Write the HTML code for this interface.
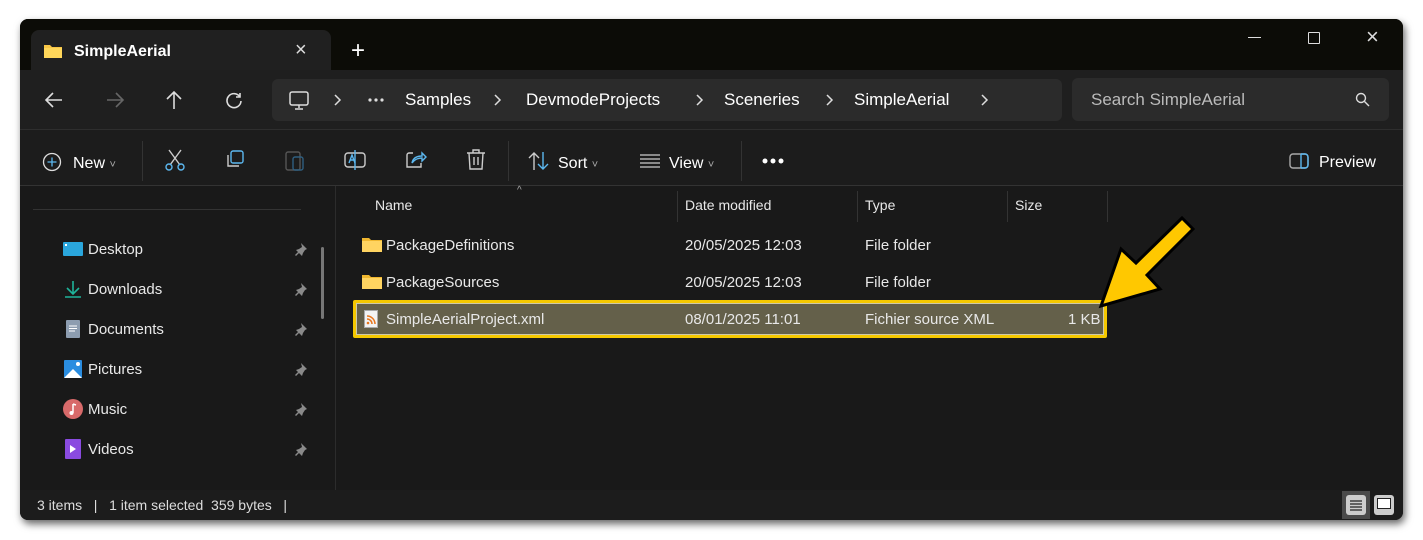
<!DOCTYPE html>
<html><head><meta charset="utf-8"><style>
*{margin:0;padding:0;box-sizing:border-box}
body{width:1423px;height:540px;background:#fff;position:relative;overflow:hidden;font-family:"Segoe UI","Liberation Sans",sans-serif;color:#fff}
.win{position:absolute;left:20px;top:19px;width:1383px;height:501px;background:#191919;border-radius:8px;overflow:hidden;box-shadow:2px 4px 8px rgba(0,0,0,.6)}
.title{position:absolute;left:0;top:0;width:100%;height:51px;background:#0c0c07}
.tab{position:absolute;left:11px;top:11px;width:300px;height:41px;background:#202020;border-radius:8px 8px 0 0}
.t{position:absolute;white-space:nowrap}
.addr{position:absolute;left:0;top:51px;width:100%;height:60px;background:#1f1f1f;border-bottom:1px solid #2e2e2e}
.tool{position:absolute;left:0;top:111px;width:100%;height:56px;background:#1c1c1c;border-bottom:1px solid #333}
.bc{position:absolute;left:252px;top:9px;width:790px;height:42px;background:#2b2b2b;border-radius:6px}
.sr{position:absolute;left:1052px;top:8px;width:317px;height:43px;background:#2b2b2b;border-radius:6px}
.sep{position:absolute;width:1px;background:#333}
.f15{font-size:17px}
.f14{font-size:15px;color:#e8e8e8}
.st{position:absolute;left:0;top:471px;width:100%;height:30px;background:#1c1c1c}
.ch{position:absolute;top:15px}
</style></head><body>
<div class="win">
 <div class="title">
  <div class="tab">
   <svg class="t" style="left:12px;top:13px" width="20" height="16"><path d="M1 2h6l2 2h10v11H1z" fill="#f7c545"/><path d="M1 5h18v10H1z" fill="#ffd65a"/></svg>
   <div class="t" style="left:43px;top:13px;font-size:16px;font-weight:bold">SimpleAerial</div>
   <div class="t" style="left:264px;top:9px;font-size:20px;color:#ddd">×</div>
  </div>
  <div class="t" style="left:331px;top:20px;font-size:24px;line-height:24px">+</div>
  <div class="t" style="left:1228px;top:18px;width:13px;height:1px;background:#ddd"></div>
  <div class="t" style="left:1288px;top:13px;width:12px;height:12px;border:1.5px solid #ddd;border-radius:1px"></div>
  <div class="t" style="left:1346px;top:5px;font-size:22px;color:#ddd">×</div>
 </div>
 <div class="addr">
  <svg class="t" style="left:24px;top:21px" width="20" height="18" stroke="#ddd" stroke-width="1.6" fill="none"><path d="M18 9H2M9 2L2 9l7 7"/></svg>
  <svg class="t" style="left:85px;top:21px" width="20" height="18" stroke="#666" stroke-width="1.6" fill="none"><path d="M2 9h16M11 2l7 7-7 7"/></svg>
  <svg class="t" style="left:145px;top:20px" width="18" height="20" stroke="#ddd" stroke-width="1.6" fill="none"><path d="M9 19V2M2 9l7-7 7 7"/></svg>
  <svg class="t" style="left:205px;top:21px" width="18" height="18" stroke="#ddd" stroke-width="1.6" fill="none"><path d="M15 6A7 7 0 1 0 16 10M15 2v4h-4"/></svg>
  <div class="bc">
   <svg class="t" style="left:17px;top:12px" width="20" height="19" stroke="#ddd" stroke-width="1.5" fill="none"><rect x="1" y="1" width="18" height="13" rx="2"/><path d="M10 14v3M6 18h8"/></svg>
   <svg class="ch" style="left:62px" width="8" height="12" stroke="#ddd" stroke-width="1.5" fill="none"><path d="M1 1l5 5-5 5"/></svg>
   <svg class="ch" style="left:96px;top:19px" width="16" height="4" fill="#ddd"><circle cx="2" cy="2" r="1.6"/><circle cx="8" cy="2" r="1.6"/><circle cx="14" cy="2" r="1.6"/></svg>
   <div class="t f15" style="left:133px;top:11px">Samples</div>
   <svg class="ch" style="left:222px" width="8" height="12" stroke="#ddd" stroke-width="1.5" fill="none"><path d="M1 1l5 5-5 5"/></svg>
   <div class="t f15" style="left:254px;top:11px">DevmodeProjects</div>
   <svg class="ch" style="left:424px" width="8" height="12" stroke="#ddd" stroke-width="1.5" fill="none"><path d="M1 1l5 5-5 5"/></svg>
   <div class="t f15" style="left:452px;top:11px">Sceneries</div>
   <svg class="ch" style="left:554px" width="8" height="12" stroke="#ddd" stroke-width="1.5" fill="none"><path d="M1 1l5 5-5 5"/></svg>
   <div class="t f15" style="left:582px;top:11px">SimpleAerial</div>
   <svg class="ch" style="left:709px" width="8" height="12" stroke="#ddd" stroke-width="1.5" fill="none"><path d="M1 1l5 5-5 5"/></svg>
  </div>
  <div class="sr">
   <div class="t f15" style="left:19px;top:12px;color:#bbb">Search SimpleAerial</div>
   <svg class="t" style="left:283px;top:14px" width="16" height="16" stroke="#ddd" stroke-width="1.4" fill="none"><circle cx="6" cy="6" r="4.5"/><path d="M9.5 9.5L14 14"/></svg>
  </div>
 </div>
 <div class="tool">
  <svg class="t" style="left:22px;top:22px" width="20" height="20" stroke="#ddd" stroke-width="1.3" fill="none"><circle cx="10" cy="10" r="8.5"/><path d="M10 5.5v9M5.5 10h9" stroke="#5cb8f0"/></svg>
  <div class="t f15" style="left:53px;top:25px;font-size:16px">New <span style="font-size:11px;color:#aaa">˅</span></div>
  <div class="sep" style="left:122px;top:11px;height:40px"></div>
  <svg class="t" style="left:145px;top:19px" width="20" height="22" stroke="#5cb8f0" stroke-width="1.4" fill="none"><path d="M4 1l11 15M16 1L5 16" stroke="#ccc"/><circle cx="4" cy="18" r="3"/><circle cx="16" cy="18" r="3"/></svg>
  <svg class="t" style="left:205px;top:20px" width="20" height="20" stroke="#5cb8f0" stroke-width="1.4" fill="none"><rect x="6" y="1" width="12" height="12" rx="2"/><path d="M3 5v11h11" stroke="#ccc"/></svg>
  <svg class="t" style="left:265px;top:19px" width="20" height="22" stroke="#555" stroke-width="1.4" fill="none"><rect x="1" y="3" width="14" height="18" rx="2"/><rect x="8" y="8" width="10" height="13" rx="2" stroke="#2f5f80"/></svg>
  <svg class="t" style="left:324px;top:19px" width="22" height="22" stroke="#ccc" stroke-width="1.4" fill="none"><rect x="1" y="4" width="20" height="14" rx="3"/><path d="M11 1v20" stroke="#5cb8f0"/><path d="M5 14l3-8 3 8M6 11h4" stroke="#5cb8f0"/></svg>
  <svg class="t" style="left:385px;top:19px" width="22" height="22" stroke="#ccc" stroke-width="1.4" fill="none"><path d="M8 4H4a2 2 0 0 0-2 2v12h14v-4"/><path d="M7 14c1-5 5-7 10-7V4l4 4-4 4V9c-4 0-7 1-10 5z" stroke="#5cb8f0"/></svg>
  <svg class="t" style="left:446px;top:19px" width="20" height="22" stroke="#ccc" stroke-width="1.4" fill="none"><path d="M1 4h18M7 4V1h6v3M3 4l1 16h12l1-16M8 8v8M12 8v8"/></svg>
  <div class="sep" style="left:488px;top:11px;height:40px"></div>
  <svg class="t" style="left:508px;top:21px" width="22" height="20" stroke-width="1.4" fill="none"><path d="M6 19V2M1 7l5-5 5 5" stroke="#ccc"/><path d="M15 1v17M10 13l5 5 5-5" stroke="#5cb8f0"/></svg>
  <div class="t f15" style="left:538px;top:25px;font-size:16px">Sort <span style="font-size:11px;color:#aaa">˅</span></div>
  <svg class="t" style="left:620px;top:24px" width="20" height="14" stroke="#ccc" stroke-width="1.3"><path d="M0 1h20M0 5h20M0 9h20M0 13h20"/></svg>
  <div class="t f15" style="left:649px;top:25px;font-size:16px">View <span style="font-size:11px;color:#aaa">˅</span></div>
  <div class="sep" style="left:721px;top:11px;height:40px"></div>
  <svg class="t" style="left:742px;top:28px" width="22" height="6" fill="#fff"><circle cx="3" cy="3" r="2.5"/><circle cx="11" cy="3" r="2.5"/><circle cx="19" cy="3" r="2.5"/></svg>
  <svg class="t" style="left:1269px;top:23px" width="20" height="16" fill="none" stroke-width="1.4"><rect x="1" y="1" width="18" height="14" rx="3" stroke="#aaa"/><path d="M12 1v14" stroke="#5cb8f0"/><path d="M12 1h4a3 3 0 0 1 3 3v8a3 3 0 0 1-3 3h-4" stroke="#5cb8f0"/></svg>
  <div class="t f15" style="left:1299px;top:24px;font-size:16px">Preview</div>
 </div>
 <!-- sidebar -->
 <div class="t" style="left:13px;top:190px;width:268px;height:1px;background:#333"></div>
 <div class="t" style="left:301px;top:228px;width:3px;height:72px;background:#777;border-radius:2px"></div>
 <div class="t" style="left:315px;top:167px;width:1px;height:304px;background:#2c2c2c"></div>
 <svg class="t" style="left:43px;top:223px" width="20" height="16"><rect x="0" y="0" width="20" height="14" rx="1" fill="#2aa6dc"/><rect x="2" y="2" width="2" height="2" fill="#fff"/></svg>
 <svg class="t" style="left:44px;top:261px" width="18" height="18" stroke="#1fb39a" stroke-width="1.6" fill="none"><path d="M9 1v12M3 8l6 6 6-6M1 17h16"/></svg>
 <svg class="t" style="left:46px;top:301px" width="14" height="18"><rect width="14" height="18" rx="1" fill="#8d9db0"/><path d="M3 6h8M3 8.5h8M3 11h6" stroke="#fff" stroke-width="1"/></svg>
 <svg class="t" style="left:44px;top:341px" width="18" height="18"><rect width="18" height="18" rx="1" fill="#2a8de0"/><path d="M0 18L9 9l9 9z" fill="#fff"/><circle cx="14" cy="4" r="2" fill="#fff"/></svg>
 <svg class="t" style="left:43px;top:380px" width="20" height="20"><circle cx="10" cy="10" r="10" fill="#d86a6a"/><path d="M10 5v9M10 5l3 1" stroke="#fff" stroke-width="1.5" fill="none"/><circle cx="8.5" cy="14" r="2" fill="#fff"/></svg>
 <svg class="t" style="left:45px;top:420px" width="16" height="20"><rect width="16" height="20" rx="1" fill="#8a4be0"/><path d="M5 6l6 4-6 4z" fill="#fff"/></svg>
 <div class="t f14" style="left:68px;top:222px">Desktop</div>
 <div class="t f14" style="left:68px;top:262px">Downloads</div>
 <div class="t f14" style="left:68px;top:302px">Documents</div>
 <div class="t f14" style="left:68px;top:342px">Pictures</div>
 <div class="t f14" style="left:68px;top:382px">Music</div>
 <div class="t f14" style="left:68px;top:422px">Videos</div>
 <svg class="t" style="left:274px;top:223px" width="14" height="226" fill="#8a8a8a"><g id="p"><path d="M7 1l6 6-2 1-2 3-1 3-6-6 3-1 3-2z M4 10l-3 3 1 1 3-3z"/></g><use href="#p" y="40"/><use href="#p" y="80"/><use href="#p" y="120"/><use href="#p" y="160"/><use href="#p" y="200"/></svg>
 <!-- headers -->
 <div class="t" style="left:497px;top:166px;font-size:10px;color:#aaa">^</div>
 <div class="t f14" style="left:355px;top:178px;font-size:14px">Name</div>
 <div class="sep" style="left:657px;top:172px;height:31px"></div>
 <div class="t f14" style="left:665px;top:178px;font-size:14px">Date modified</div>
 <div class="sep" style="left:837px;top:172px;height:31px"></div>
 <div class="t f14" style="left:845px;top:178px;font-size:14px">Type</div>
 <div class="sep" style="left:987px;top:172px;height:31px"></div>
 <div class="t f14" style="left:995px;top:178px;font-size:14px">Size</div>
 <div class="sep" style="left:1087px;top:172px;height:31px"></div>
 <!-- rows -->
 <svg class="t" style="left:342px;top:218px" width="20" height="15"><path d="M0 1h7l2 2h11v12H0z" fill="#f0b72f"/><path d="M0 4h20v11H0z" fill="#ffd461"/></svg>
 <svg class="t" style="left:342px;top:255px" width="20" height="15"><path d="M0 1h7l2 2h11v12H0z" fill="#f0b72f"/><path d="M0 4h20v11H0z" fill="#ffd461"/></svg>
 <div class="t f14" style="left:366px;top:218px">PackageDefinitions</div>
 <div class="t f14" style="left:665px;top:218px">20/05/2025 12:03</div>
 <div class="t f14" style="left:845px;top:218px">File folder</div>
 <div class="t f14" style="left:366px;top:255px">PackageSources</div>
 <div class="t f14" style="left:665px;top:255px">20/05/2025 12:03</div>
 <div class="t f14" style="left:845px;top:255px">File folder</div>
 <div class="t" style="left:333px;top:281px;width:754px;height:38px;background:#f5c800;border-radius:2px"></div>
 <div class="t" style="left:336px;top:284px;width:748px;height:32px;background:#64604a;border:1px solid #cfc9a8"></div>
 <svg class="t" style="left:344px;top:291px" width="14" height="18"><rect x=".5" y=".5" width="13" height="17" fill="#f3f3f3" stroke="#aaa"/><path d="M3 6a8 8 0 0 1 8 8M3 9a5 5 0 0 1 5 5" stroke="#e8761e" stroke-width="1.5" fill="none"/><circle cx="4" cy="13" r="1.3" fill="#e8761e"/></svg>
 <div class="t f14" style="left:366px;top:292px">SimpleAerialProject.xml</div>
 <div class="t f14" style="left:665px;top:292px">08/01/2025 11:01</div>
 <div class="t f14" style="left:845px;top:292px">Fichier source XML</div>
 <div class="t f14" style="left:1048px;top:292px">1 KB</div>
 <div class="st">
  <div class="t" style="left:17px;top:7px;font-size:14px;color:#ddd">3 items &nbsp;&nbsp;| &nbsp;&nbsp;1 item selected &nbsp;359 bytes &nbsp;&nbsp;|</div>
  <div class="t" style="left:1322px;top:1px;width:28px;height:28px;background:#4a4a4a"></div>
  <div class="t" style="left:1326px;top:5px;width:20px;height:20px;background:#ccc;border-radius:3px"></div>
  <svg class="t" style="left:1330px;top:10px" width="12" height="11" stroke="#222" stroke-width="1.2"><path d="M0 1h12M0 4h12M0 7h12M0 10h12"/></svg>
  <div class="t" style="left:1354px;top:5px;width:20px;height:20px;background:#ccc;border-radius:3px"></div>
  <div class="t" style="left:1357px;top:8px;width:14px;height:11px;background:#fff;border:1.5px solid #222"></div>
 </div>
</div>
<svg style="position:absolute;left:0;top:0" width="1423" height="540"><path d="M1101 306L1121 249L1136 263L1182 218L1193 229L1147 275L1160 289Z" fill="#ffc800" stroke="#000" stroke-width="3" stroke-linejoin="miter"/></svg>
</body></html>
